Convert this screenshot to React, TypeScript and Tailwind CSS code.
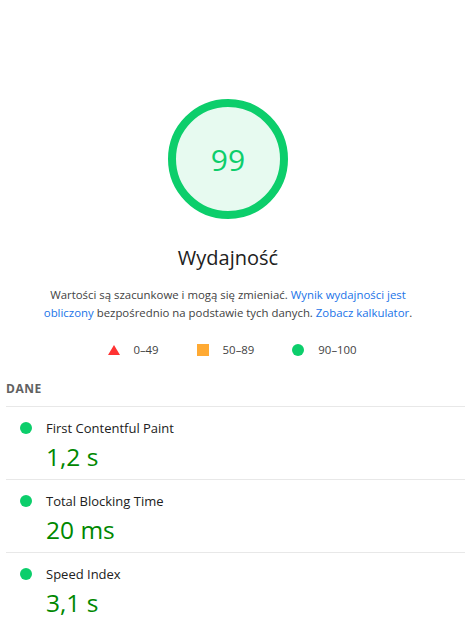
import React from "react";

const metrics = [
  { label: "First Contentful Paint", value: "1,2 s" },
  { label: "Total Blocking Time", value: "20 ms" },
  { label: "Speed Index", value: "3,1 s" },
];

export default function App() {
  return (
    <div className="w-[472px] h-[627px] bg-white overflow-hidden text-[#212121] font-['Open_Sans',sans-serif]">
      <div className="w-[456px] flex flex-col items-center pt-[99px]">
        <svg width="120" height="120" viewBox="0 0 120 120">
          <circle cx="60" cy="60" r="56" fill="#e7faf0" stroke="#0cce6b" strokeWidth="8" />
          <text x="60" y="60" textAnchor="middle" dominantBaseline="central" fill="#0cce6b" fontSize="30" fontFamily="'Open Sans', sans-serif">99</text>
        </svg>
        <div className="mt-[25px] text-[20px] leading-[28px] text-[#212121]">Wydajność</div>
        <p className="mt-[14px] w-[380px] text-center text-[11.4px] leading-[18px] text-[#424242]">
          Wartości są szacunkowe i mogą się zmieniać.{" "}
          <span className="text-[#1a73e8]">Wynik wydajności jest obliczony</span> bezpośrednio na podstawie tych danych.{" "}
          <span className="text-[#1a73e8]">Zobacz kalkulator</span>.
        </p>
        <div className="mt-[20px] flex items-center gap-[38px] text-[11.4px] leading-[16px] text-[#424242] pl-[9px]">
          <div className="flex items-center gap-[13px]">
            <svg width="12" height="12" viewBox="0 0 12 12"><polygon points="6,1 12,11 0,11" fill="#ff3333" /></svg>
            <span>0–49</span>
          </div>
          <div className="flex items-center gap-[14px]">
            <span className="block w-[12px] h-[12px] bg-[#ffaa33]" />
            <span>50–89</span>
          </div>
          <div className="flex items-center gap-[14px]">
            <span className="block w-[12px] h-[12px] rounded-full bg-[#0cce6b]" />
            <span>90–100</span>
          </div>
        </div>
      </div>
      <div className="mt-[22px] pl-[6px] pr-[7px]">
        <div className="text-[12px] leading-[18px] font-bold tracking-[0.5px] text-[#616161] pb-[8px] border-b border-[#e8e8e8]">DANE</div>
        {metrics.map((m, i) => (
          <div key={m.label} className={`pt-[11px] pb-[6px] ${i < metrics.length - 1 ? "border-b border-[#e8e8e8]" : ""}`}>
            <div className="flex items-center">
              <span className="block w-[12px] h-[12px] rounded-full bg-[#0cce6b] ml-[14px] mr-[14px]" />
              <span className="text-[13px] leading-[20px] text-[#212121]">{m.label}</span>
            </div>
            <div className="pl-[40px] text-[24.5px] leading-[32px] text-[#008800] mt-[3px]">{m.value}</div>
          </div>
        ))}
      </div>
    </div>
  );
}
